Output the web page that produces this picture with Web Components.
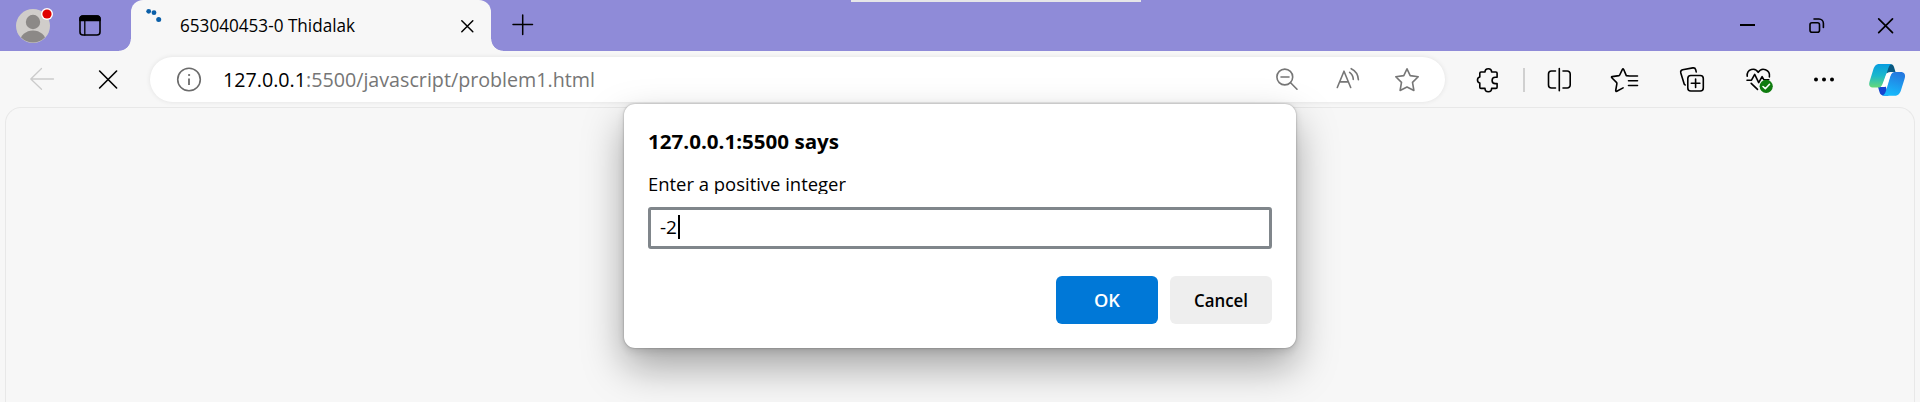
<!DOCTYPE html>
<html lang="en"><head><meta charset="utf-8"><title>653040453-0 Thidalak</title>
<style>html,body{margin:0;height:100%;overflow:hidden;background:#f7f7f7}</style></head>
<body><browser-window></browser-window>
<script>
class Base extends HTMLElement{
  constructor(){super();this.attachShadow({mode:'open'}).innerHTML=this.view();}
}
/* One line of text condensed or expanded to a given run width */
class FitText extends Base{
  view(){return `<style>:host{display:block;white-space:pre;flex:none}span{display:inline-block;transform-origin:0 50%}</style><span><slot></slot></span>`}
  connectedCallback(){
    const w=+this.getAttribute('w'),s=this.shadowRoot.querySelector('span');
    this.style.width=w+'px';
    s.style.transform=`scaleX(${w/s.getBoundingClientRect().width})`;
  }
}
customElements.define('fit-text',FitText);

/* Icon: box="x y w h" is its drawing area */
class UiIcon extends HTMLElement{
  connectedCallback(){
    const b=this.getAttribute('box'),[,,w,h]=b.split(' ');
    const r=this.attachShadow({mode:'open'});
    r.innerHTML=`<style>:host{display:block;flex:none}svg{display:block;fill:none;stroke:currentColor;stroke-width:1.6;stroke-linecap:round;stroke-linejoin:round}</style><svg width="${w}" height="${h}" viewBox="${b}">${ICONS[this.getAttribute('name')]}</svg>`;
  }
}
const ICONS={
 avatar:`<defs><clipPath id="c"><circle cx="33" cy="26" r="16.5"/></clipPath></defs><g stroke="none"><circle cx="33" cy="26" r="17" fill="#d0cdca"/><g clip-path="url(#c)" fill="#8c8987"><circle cx="33" cy="22" r="7.2"/><ellipse cx="33" cy="42" rx="13" ry="11.5"/></g><circle cx="47" cy="14" r="6" fill="#fff"/><circle cx="47" cy="14" r="4.6" fill="#e00000"/></g>`,
 tabs:`<rect x="80" y="16" width="20" height="19" rx="3"/><path d="M80 20.5v-1.5a3 3 0 0 1 3-3h14a3 3 0 0 1 3 3v1.5z" fill="#000"/><path d="M84.8 20v15" stroke-width="1.3"/>`,
 spin:`<g fill="#0b5fa8" stroke="none"><circle cx="148.7" cy="11.3" r="2.4"/><circle cx="154" cy="12.7" r="2.4"/><circle cx="158.7" cy="19.5" r="2.5"/></g>`,
 tabx:`<path d="M461.8 20.8l11 11M472.8 20.8l-11 11" stroke-width="1.5"/>`,
 plus:`<path d="M513 24.5h19.5M522.7 15v19.5" stroke-width="1.5"/>`,
 min:`<path d="M1740 25h15" stroke-width="2" stroke-linecap="butt"/>`,
 restore:`<rect x="1810" y="22.8" width="9.5" height="9.5" rx="2"/><path d="M1814 19h5a4.4 4.4 0 0 1 4.4 4.4v4"/>`,
 close:`<path d="M1878.7 18.8l13.8 13.8M1892.5 18.8l-13.8 13.8" stroke-width="1.7"/>`,
 back:`<path d="M53.5 79H30.8M41.5 68.5L30.8 79l10.7 10.2" stroke="#cbcbcb" stroke-width="1.3"/>`,
 stop:`<path d="M99.6 71l17 17M116.6 71l-17 17"/>`,
 info:`<g stroke="#6b6b6b"><circle cx="189" cy="79.5" r="11.3"/><path d="M189 78.5v6.5" stroke-linecap="butt" stroke-width="1.8"/><circle cx="189" cy="75" r=".6" fill="#6b6b6b" stroke-width="1"/></g>`,
 zoom:`<circle cx="1284.8" cy="77" r="7.9"/><path d="M1281 77h8M1290.6 82.8l6.4 6.4"/>`,
 read:`<path d="M1337.3 87.5l6.7-16.3 6.7 16.3M1339.8 81.9h8.4M1349.6 72.4q3.5 2.6 3.7 7M1351.2 68.7q6.7 3.2 7.2 11"/>`,
 star:`<path d="M1407 68.8l3.2 6.8 8 1.2-5.7 5.6 1.4 8.1-6.9-3.5-6.9 3.5 1.4-8.1-5.7-5.6 8-1.2z"/>`,
 puzzle:`<path d="M1479.8 73.2a1.2 1.2 0 0 1 1.2-1.2h4a3.3 3.3 0 0 1 6.6 0h4.3a1.2 1.2 0 0 1 1.2 1.2v4h-1.8a3.2 3.2 0 0 0 0 6.4h1.8v3.6a1.2 1.2 0 0 1-1.2 1.2h-4.3a3.3 3.3 0 0 1-6.6 0h-4a1.2 1.2 0 0 1-1.2-1.2v-4.1a3.1 3.1 0 0 1 0-6z"/>`,
 split:`<path d="M1559.3 68.5v22.3M1555.5 71h-4a3 3 0 0 0-3 3v11a3 3 0 0 0 3 3h4M1563 71h4.2a3 3 0 0 1 3 3v11a3 3 0 0 1-3 3H1563"/>`,
 favs:`<path d="M1637.5 76h-8l-3.2-.4-2.7-6.300q-.6-1-1.200 0l-2.700 5.700-.7.6-6.800 1q-1.200.3-.4 1.200l4.900 4.800.2 1-1.200 6.900q0 1.200 1.100.8l6.300-3.400M1628.500 80.800h9M1628.500 85.500h9"/>`,
 coll:`<rect x="1687.8" y="75.5" width="15.5" height="15.5" rx="3"/><path d="M1695.6 79v8.5M1691.3 83.2h8.6M1685.2 85l-1-.9-3.4-11.2c-.4-1.600.3-2.700 1.800-3.100l10.200-1.900c1.500-.3 2.500.4 2.900 1.800l.5 2.200"/>`,
 heart:`<path d="M1747.2 76.2c-.6-7.2 8-9.3 11-3.8 3.4-5.6 12.3-3 11.2 4.5M1747 80.2h4.500l3.200-5.800 4 8.200 3.400-6 1.700 3.100h5M1751.200 83.400l6.300 6"/><circle cx="1766.2" cy="86.3" r="6.6" fill="#107c10" stroke="none"/><path d="M1763 86.500l2.300 2.200 4.200-4.400" stroke="#fff"/>`,
 dots:`<g fill="#000" stroke="none"><circle cx="1816" cy="79.600" r="2"/><circle cx="1824" cy="79.600" r="2"/><circle cx="1832" cy="79.600" r="2"/></g>`,
 copilot:`<defs><linearGradient id="a" x1="0" y1="0" x2="0" y2="1"><stop offset="0" stop-color="#079de0"/><stop offset=".5" stop-color="#1bb8cb"/><stop offset="1" stop-color="#65d879"/></linearGradient><linearGradient id="b" x1=".6" y1="0" x2=".3" y2="1"><stop offset="0" stop-color="#2478df"/><stop offset="1" stop-color="#16bdfd"/></linearGradient></defs><g stroke="none"><path d="M1886 64h4q3.200 0 4 3l1.500 5h-5q-4 0-5 4z" fill="#095981"/><path d="M1885 84l-6 3h-1l1.500 5q1 3.800 5 3.800h4z" fill="#1545d0"/><path d="M1889.500 64h-10c-4 0-5.300 2.500-6.500 6.500l-3.400 11c-1.300 4 .4 6 4 6h4.400c4 0 5-2.500 6-5.500l4.200-13.500q1-3.700 3.400-4.500z" fill="url(#a)"/><path d="M1885.600 95.800h9c4 0 5.500-2.500 6.700-6.500l3.300-10.500c1.500-4.300-.4-6.800-4-6.800h-4.600c-4 0-5 2-6 5.500l-4 13.300q-1 4-4 5z" fill="url(#b)"/><path d="M1886.500 73.200h5q-1.300 2-2 4.500l-2.300 7.300q-.7 2-2.700 2h-4q1.600-1.300 2.400-4z" fill="#fff"/></g>`
};
customElements.define('ui-icon',UiIcon);

class TabStrip extends Base{view(){return `<style>
:host{display:flex;height:51px;background:#8f8bd8;color:#000;position:relative}
.tab{width:360px;height:51px;margin-left:30px;background:#f7f7f7;border-radius:12px 12px 0 0;display:flex;position:relative}
.tab::before,.tab::after{content:"";position:absolute;bottom:0;width:12px;height:12px}
.tab::before{left:-12px;background:radial-gradient(circle at 0 0,#8f8bd8 11.3px,#f7f7f7 12.1px)}
.tab::after{right:-12px;background:radial-gradient(circle at 100% 0,#8f8bd8 11.3px,#f7f7f7 12.1px)}
.tab fit-text{margin:13px 0 0 16px;font-size:17.5px;line-height:25px}
.tabx{margin-left:102px}.tabs{margin-left:24px}.plus{margin-left:14px}.win{margin-left:auto;display:flex;gap:37px;padding-right:19px}
.handle{position:absolute;left:851px;top:0;width:290px;height:2px;background:#e6e6e8}
</style>
<ui-icon name="avatar" box="0 0 53 51"></ui-icon><ui-icon class="tabs" name="tabs" box="77 0 24 51"></ui-icon>
<div class="tab"><ui-icon name="spin" box="131 0 33 51"></ui-icon><fit-text w="175"><slot></slot></fit-text><ui-icon class="tabx" name="tabx" box="457 0 20 51"></ui-icon></div>
<ui-icon class="plus" name="plus" box="505 0 35 51"></ui-icon>
<div class="win"><ui-icon name="min" box="1731 0 32 51"></ui-icon><ui-icon name="restore" box="1800 0 32 51"></ui-icon><ui-icon name="close" box="1869 0 32 51"></ui-icon></div>
<div class="handle"></div>`}}
customElements.define('tab-strip',TabStrip);

class AddressBar extends Base{view(){return `<style>
:host{display:flex;width:1295px;height:45px;box-sizing:border-box;background:#fff;border-radius:23px;box-shadow:0 0 5px rgba(0,0,0,.09);color:#767676;flex:none}
.info{margin-left:24px}fit-text{margin:7px 0 0 19px;font-size:20.5px;line-height:30px}b{font-weight:400;color:#000}
.act{margin-left:auto;display:flex;gap:20px;padding-right:18px}
</style><ui-icon class="info" name="info" box="174 57 30 45"></ui-icon><fit-text w="372"><b>127.0.0.1</b>:5500/javascript/problem1.html</fit-text>
<div class="act"><ui-icon name="zoom" box="1267 57 40 45"></ui-icon><ui-icon name="read" box="1327 57 40 45"></ui-icon><ui-icon name="star" box="1387 57 40 45"></ui-icon></div>`}}
customElements.define('address-bar',AddressBar);

class ToolBar extends Base{view(){return `<style>
:host{display:flex;height:56px;padding-top:6px;box-sizing:border-box;background:#f7f7f7;color:#000}
.stop{margin-left:34px}address-bar{margin-left:28px}.p{margin-left:22px}
i{width:2px;height:24px;margin:11px 14px 0 16px;background:#d0d0d0}
.tools{display:flex;gap:26px}.cp{margin-left:24px}
</style><ui-icon name="back" box="0 57 60 45"></ui-icon><ui-icon class="stop" name="stop" box="94 57 28 45"></ui-icon>
<address-bar></address-bar><ui-icon class="p" name="puzzle" box="1467 57 40 45"></ui-icon><i></i>
<div class="tools"><ui-icon name="split" box="1539 57 40 45"></ui-icon><ui-icon name="favs" box="1605 57 40 45"></ui-icon><ui-icon name="coll" box="1671 57 40 45"></ui-icon><ui-icon name="heart" box="1737 57 40 45"></ui-icon><ui-icon name="dots" box="1803 57 40 45"></ui-icon></div>
<ui-icon class="cp" name="copilot" box="1867 57 40 45"></ui-icon>`}}
customElements.define('tool-bar',ToolBar);

class DialogButton extends Base{view(){return `<style>
:host{display:flex;justify-content:center;width:102px;height:48px;border-radius:6px;background:#eee;color:#000;font-weight:600;font-size:17.5px;line-height:48px}
:host([primary]){background:#0078d7;color:#fff}</style><slot></slot>`}}
customElements.define('dialog-button',DialogButton);

class PromptDialog extends Base{view(){return `<style>
:host{position:absolute;left:624px;top:104px;width:672px;height:244px;box-sizing:border-box;padding:24px;background:#fff;border-radius:11px;color:#000;
box-shadow:0 0 2px rgba(0,0,0,.35),0 19px 40px rgba(0,0,0,.34),0 3px 9px rgba(0,0,0,.12)}
.h{font-size:20px;font-weight:700;line-height:28px}
.m{font-size:19px;line-height:26px;margin-top:15px;height:26px;clip-path:inset(0 0 3px 0)}
.input{display:flex;height:42px;margin-top:10px;box-sizing:border-box;border:3px solid #80868b;border-radius:3px;padding:3px 0 0 9px}
.input fit-text{font-size:18.5px;line-height:28px}
.caret{width:1.5px;height:24px;margin:2px 0 0 1px;background:#000}
.row{display:flex;justify-content:flex-end;gap:12px;margin-top:27px}
</style><fit-text class="h" w="191">127.0.0.1:5500 says</fit-text><fit-text class="m" w="198">Enter a positive integer</fit-text>
<div class="input"><fit-text w="17">-2</fit-text><div class="caret"></div></div>
<div class="row"><dialog-button primary><fit-text w="26">OK</fit-text></dialog-button><dialog-button><fit-text w="54">Cancel</fit-text></dialog-button></div>`}}
customElements.define('prompt-dialog',PromptDialog);

class BrowserWindow extends Base{view(){return `<style>
:host{display:flex;flex-direction:column;position:relative;width:1920px;height:402px;overflow:hidden;background:#f7f7f7;font-family:"Open Sans","Noto Sans",sans-serif}
.page{flex:1;margin:0 5px;border:1px solid #e8e8e8;border-bottom:0;border-radius:16px 16px 0 0}
</style><tab-strip>653040453-0 Thidalak</tab-strip><tool-bar></tool-bar><div class="page"></div><prompt-dialog></prompt-dialog>`}}
customElements.define('browser-window',BrowserWindow);
</script></body></html>
